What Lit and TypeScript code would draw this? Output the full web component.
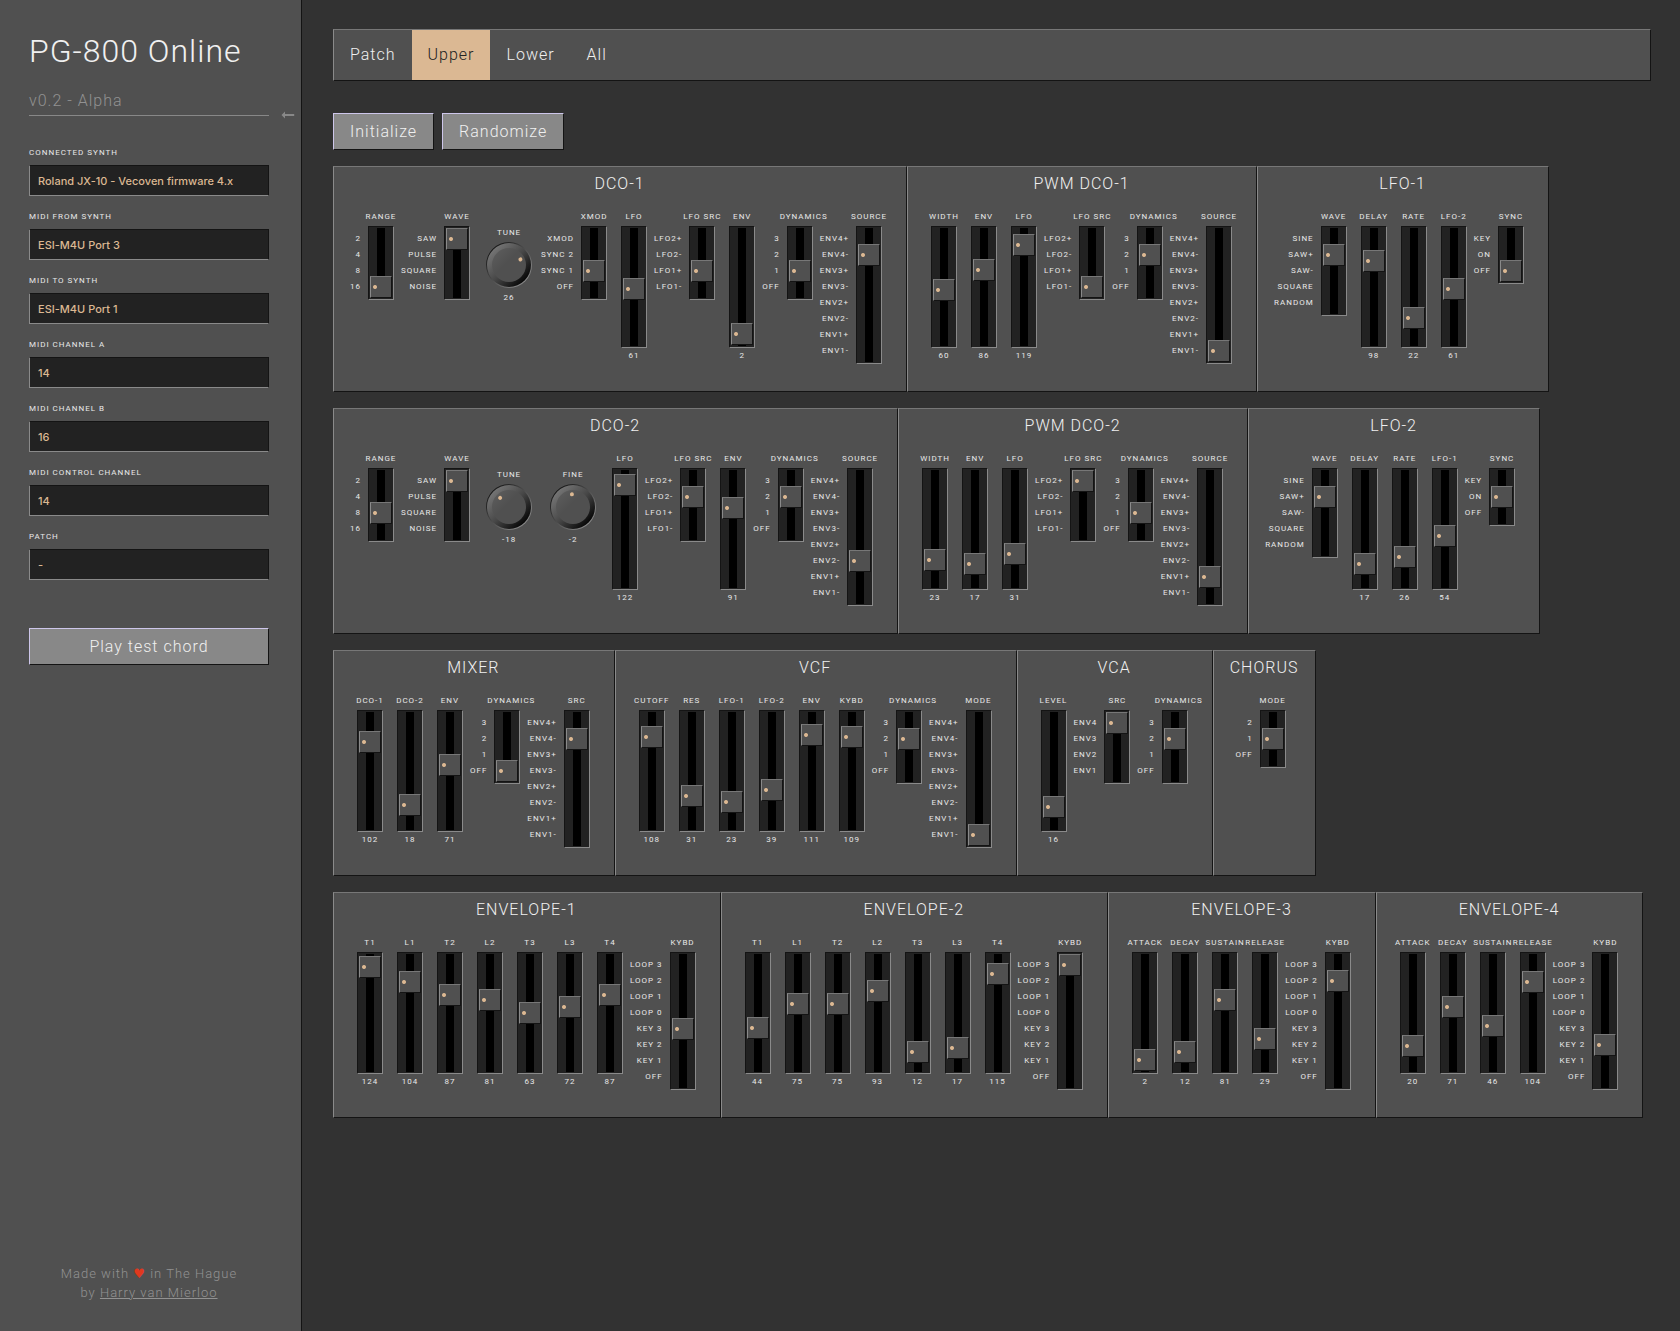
import { LitElement, html, css, svg, nothing } from "lit";
import { customElement, property, state } from "lit/decorators.js";
import { classMap } from "lit/directives/class-map.js";
import { styleMap } from "lit/directives/style-map.js";

type Control =
  | { kind: "fader"; name: string; value: number }
  | { kind: "knob"; name: string; value: number }
  | { kind: "switch"; name: string; options: string[]; index: number };

interface Section {
  title: string;
  controls: Control[];
}

const RANGES = ["2", "4", "8", "16"];
const WAVES = ["SAW", "PULSE", "SQUARE", "NOISE"];
const XMODS = ["XMOD", "SYNC 2", "SYNC 1", "OFF"];
const LFO_SOURCES = ["LFO2+", "LFO2-", "LFO1+", "LFO1-"];
const DYNAMICS = ["3", "2", "1", "OFF"];
const ENV_MODES = ["ENV4+", "ENV4-", "ENV3+", "ENV3-", "ENV2+", "ENV2-", "ENV1+", "ENV1-"];
const ENV_SOURCES = ["ENV4", "ENV3", "ENV2", "ENV1"];
const LFO_WAVES = ["SINE", "SAW+", "SAW-", "SQUARE", "RANDOM"];
const SYNCS = ["KEY", "ON", "OFF"];
const CHORUS_MODES = ["2", "1", "OFF"];
const KEYBOARD = ["LOOP 3", "LOOP 2", "LOOP 1", "LOOP 0", "KEY 3", "KEY 2", "KEY 1", "OFF"];

const fader = (name: string, value: number): Control => ({ kind: "fader", name, value });
const knob = (name: string, value: number): Control => ({ kind: "knob", name, value });
const choice = (name: string, options: string[], index: number): Control => ({
  kind: "switch",
  name,
  options,
  index,
});

const ROWS: Section[][] = [
  [
    {
      title: "DCO-1",
      controls: [
        choice("RANGE", RANGES, 3),
        choice("WAVE", WAVES, 0),
        knob("TUNE", 26),
        choice("XMOD", XMODS, 2),
        fader("LFO", 61),
        choice("LFO SRC", LFO_SOURCES, 2),
        fader("ENV", 2),
        choice("DYNAMICS", DYNAMICS, 2),
        choice("SOURCE", ENV_MODES, 1),
      ],
    },
    {
      title: "PWM DCO-1",
      controls: [
        fader("WIDTH", 60),
        fader("ENV", 86),
        fader("LFO", 119),
        choice("LFO SRC", LFO_SOURCES, 3),
        choice("DYNAMICS", DYNAMICS, 1),
        choice("SOURCE", ENV_MODES, 7),
      ],
    },
    {
      title: "LFO-1",
      controls: [
        choice("WAVE", LFO_WAVES, 1),
        fader("DELAY", 98),
        fader("RATE", 22),
        fader("LFO-2", 61),
        choice("SYNC", SYNCS, 2),
      ],
    },
  ],
  [
    {
      title: "DCO-2",
      controls: [
        choice("RANGE", RANGES, 2),
        choice("WAVE", WAVES, 0),
        knob("TUNE", -18),
        knob("FINE", -2),
        fader("LFO", 122),
        choice("LFO SRC", LFO_SOURCES, 1),
        fader("ENV", 91),
        choice("DYNAMICS", DYNAMICS, 1),
        choice("SOURCE", ENV_MODES, 5),
      ],
    },
    {
      title: "PWM DCO-2",
      controls: [
        fader("WIDTH", 23),
        fader("ENV", 17),
        fader("LFO", 31),
        choice("LFO SRC", LFO_SOURCES, 0),
        choice("DYNAMICS", DYNAMICS, 2),
        choice("SOURCE", ENV_MODES, 6),
      ],
    },
    {
      title: "LFO-2",
      controls: [
        choice("WAVE", LFO_WAVES, 1),
        fader("DELAY", 17),
        fader("RATE", 26),
        fader("LFO-1", 54),
        choice("SYNC", SYNCS, 1),
      ],
    },
  ],
  [
    {
      title: "MIXER",
      controls: [
        fader("DCO-1", 102),
        fader("DCO-2", 18),
        fader("ENV", 71),
        choice("DYNAMICS", DYNAMICS, 3),
        choice("SRC", ENV_MODES, 1),
      ],
    },
    {
      title: "VCF",
      controls: [
        fader("CUTOFF", 108),
        fader("RES", 31),
        fader("LFO-1", 23),
        fader("LFO-2", 39),
        fader("ENV", 111),
        fader("KYBD", 109),
        choice("DYNAMICS", DYNAMICS, 1),
        choice("MODE", ENV_MODES, 7),
      ],
    },
    {
      title: "VCA",
      controls: [
        fader("LEVEL", 16),
        choice("SRC", ENV_SOURCES, 0),
        choice("DYNAMICS", DYNAMICS, 1),
      ],
    },
    { title: "CHORUS", controls: [choice("MODE", CHORUS_MODES, 1)] },
  ],
  [
    {
      title: "ENVELOPE-1",
      controls: [
        fader("T1", 124),
        fader("L1", 104),
        fader("T2", 87),
        fader("L2", 81),
        fader("T3", 63),
        fader("L3", 72),
        fader("T4", 87),
        choice("KYBD", KEYBOARD, 4),
      ],
    },
    {
      title: "ENVELOPE-2",
      controls: [
        fader("T1", 44),
        fader("L1", 75),
        fader("T2", 75),
        fader("L2", 93),
        fader("T3", 12),
        fader("L3", 17),
        fader("T4", 115),
        choice("KYBD", KEYBOARD, 0),
      ],
    },
    {
      title: "ENVELOPE-3",
      controls: [
        fader("ATTACK", 2),
        fader("DECAY", 12),
        fader("SUSTAIN", 81),
        fader("RELEASE", 29),
        choice("KYBD", KEYBOARD, 1),
      ],
    },
    {
      title: "ENVELOPE-4",
      controls: [
        fader("ATTACK", 20),
        fader("DECAY", 71),
        fader("SUSTAIN", 46),
        fader("RELEASE", 104),
        choice("KYBD", KEYBOARD, 5),
      ],
    },
  ],
];

@customElement("synth-section")
export class SynthSection extends LitElement {
  static styles = css`
    :host {
      display: block;
      box-sizing: border-box;
      padding: 0 17px 27px 16px;
      background: #505050;
      border: 1px solid;
      border-color: #777 #141414 #141414 #8a8a8a;
    }
    .title {
      margin: 0 0 7px;
      font-size: 16px;
      font-weight: 300;
      line-height: 34px;
      letter-spacing: 1px;
      text-align: center;
      color: #f0f0f0;
    }
    .controls {
      display: flex;
      justify-content: center;
      align-items: flex-start;
      font-size: 8px;
      font-weight: 400;
      letter-spacing: 1px;
      white-space: nowrap;
      color: #e8e8e8;
    }
    .fader,
    .knob {
      display: flex;
      flex-direction: column;
      align-items: center;
      width: 40px;
    }
    .knob {
      width: 64px;
      padding-top: 16px;
    }
    .switch {
      display: grid;
      grid-template-columns: auto 40px;
      justify-items: center;
    }
    .name {
      width: 100%;
      line-height: 18px;
      text-align: center;
    }
    .switch .name {
      grid-column: 2;
    }
    .value {
      line-height: 16px;
    }
    .knob .value {
      line-height: 20px;
    }
    .options {
      grid-column: 1;
      margin: 0;
      padding: 5px 0 0;
      list-style: none;
      text-align: right;
      line-height: 16px;
    }
    .track {
      appearance: none;
      writing-mode: vertical-lr;
      direction: rtl;
      box-sizing: border-box;
      width: 26px;
      height: 122px;
      margin: 0;
      padding: 1px;
      border: 1px solid;
      border-color: #141414 #8a8a8a #8a8a8a #141414;
      background: linear-gradient(#000, #000) center / 8px 100% no-repeat content-box, #222;
      cursor: pointer;
    }
    .track::-webkit-slider-runnable-track {
      width: 22px;
    }
    .track::-webkit-slider-thumb {
      appearance: none;
      box-sizing: border-box;
      width: 22px;
      height: 22px;
      border: 1px solid;
      border-color: #777 #141414 #141414 #8a8a8a;
      background: radial-gradient(circle at 4px 10px, #dcb892 1.5px, transparent 2.4px), #505050;
    }
    .dial {
      position: relative;
      width: 46px;
      height: 46px;
    }
    .face {
      display: block;
      width: 46px;
      height: 46px;
    }
    .turn {
      position: absolute;
      inset: 0;
      width: 100%;
      height: 100%;
      margin: 0;
      opacity: 0;
      cursor: pointer;
    }
  `;

  @property({ attribute: false }) section: Section = { title: "", controls: [] };

  private change(index: number, patch: Partial<{ value: number; index: number }>) {
    const controls = this.section.controls.map((c, i) =>
      i === index ? ({ ...c, ...patch } as Control) : c,
    );
    this.section = { ...this.section, controls };
  }

  private renderDial(value: number) {
    const angle = value * 2.46;
    return svg`
      <svg class="face" viewBox="0 0 46 46" aria-hidden="true">
        <defs>
          <linearGradient id="rim" x1="0.15" y1="0.15" x2="0.85" y2="0.85">
            <stop offset="0" stop-color="#161616" />
            <stop offset="1" stop-color="#8a8a8a" />
          </linearGradient>
          <linearGradient id="bevel" x1="0.15" y1="0.15" x2="0.85" y2="0.85">
            <stop offset="0" stop-color="#747474" />
            <stop offset="0.5" stop-color="#484848" />
            <stop offset="1" stop-color="#080808" />
          </linearGradient>
          <linearGradient id="cap" x1="0.15" y1="0.15" x2="0.85" y2="0.85">
            <stop offset="0" stop-color="#5a5a5a" />
            <stop offset="0.4" stop-color="#505050" />
          </linearGradient>
        </defs>
        <circle cx="23" cy="23" r="23" fill="url(#rim)" />
        <circle cx="23" cy="23" r="22" fill="url(#bevel)" />
        <circle cx="23" cy="23" r="17" fill="url(#cap)" />
        <circle cx="23" cy="10.3" r="2" fill="#dcb892" transform="rotate(${angle} 23 23)" />
      </svg>`;
  }

  private renderControl(c: Control, i: number) {
    const id = `control-${i}`;
    if (c.kind === "fader") {
      return html`<div class="fader">
        <label class="name" for=${id}>${c.name}</label>
        <input
          class="track"
          id=${id}
          type="range"
          min="0"
          max="127"
          .value=${String(c.value)}
          @input=${(e: Event) => this.change(i, { value: Number((e.target as HTMLInputElement).value) })}
        />
        <output class="value" for=${id}>${c.value}</output>
      </div>`;
    }
    if (c.kind === "knob") {
      return html`<div class="knob">
        <label class="name" for=${id}>${c.name}</label>
        <div class="dial">
          ${this.renderDial(c.value)}
          <input
            class="turn"
            id=${id}
            type="range"
            min="-64"
            max="63"
            .value=${String(c.value)}
            @input=${(e: Event) => this.change(i, { value: Number((e.target as HTMLInputElement).value) })}
          />
        </div>
        <output class="value" for=${id}>${c.value}</output>
      </div>`;
    }
    const last = c.options.length - 1;
    return html`<div class="switch">
      <label class="name" for=${id}>${c.name}</label>
      <ul class="options">
        ${c.options.map((o) => html`<li>${o}</li>`)}
      </ul>
      <input
        class="track"
        id=${id}
        type="range"
        min="0"
        max=${last}
        style=${styleMap({ height: `${c.options.length * 16 + 10}px` })}
        .value=${String(last - c.index)}
        @input=${(e: Event) => this.change(i, { index: last - Number((e.target as HTMLInputElement).value) })}
      />
    </div>`;
  }

  render() {
    return html`
      <h2 class="title">${this.section.title}</h2>
      <div class="controls">${this.section.controls.map((c, i) => this.renderControl(c, i))}</div>
    `;
  }
}

const FIELDS: { id: string; label: string; value: string; text?: boolean }[] = [
  { id: "synth", label: "CONNECTED SYNTH", value: "Roland JX-10 - Vecoven firmware 4.x" },
  { id: "midi-from", label: "MIDI FROM SYNTH", value: "ESI-M4U Port 3" },
  { id: "midi-to", label: "MIDI TO SYNTH", value: "ESI-M4U Port 1" },
  { id: "channel-a", label: "MIDI CHANNEL A", value: "14" },
  { id: "channel-b", label: "MIDI CHANNEL B", value: "16" },
  { id: "channel-control", label: "MIDI CONTROL CHANNEL", value: "14" },
  { id: "patch", label: "PATCH", value: "-", text: true },
];

const TABS = ["Patch", "Upper", "Lower", "All"];

@customElement("app-root")
export class AppRoot extends LitElement {
  static styles = css`
    :host {
      display: flex;
      min-height: 100vh;
      background: #323232;
      font-family: Roboto, "Liberation Sans", sans-serif;
      font-size: 16px;
      font-weight: 300;
      letter-spacing: 1px;
      color: #f0f0f0;
    }
    .sidebar {
      display: flex;
      flex-direction: column;
      flex: none;
      box-sizing: border-box;
      width: 302px;
      padding: 31px 32px 29px 29px;
      background: #505050;
      border-right: 1px solid #141414;
    }
    .brand {
      margin: 0;
      font-size: 32px;
      font-weight: 300;
      line-height: 40px;
      white-space: nowrap;
    }
    .version-row {
      position: relative;
      margin-bottom: 28px;
      padding: 16px 0 1px;
      border-bottom: 1px solid #888;
    }
    .version {
      margin: 0;
      line-height: 27px;
      color: #929292;
    }
    .collapse {
      position: absolute;
      right: -26px;
      bottom: -7px;
      width: 14px;
      height: 14px;
      padding: 0;
      border: 0;
      background: none;
      cursor: pointer;
    }
    .arrow {
      display: block;
      width: 14px;
      height: 14px;
    }
    .fields {
      display: grid;
      gap: 12px;
    }
    .field {
      display: grid;
      gap: 3px;
    }
    .field-label {
      font-size: 8px;
      font-weight: 400;
      line-height: 18px;
      color: #e8e8e8;
    }
    .box {
      appearance: none;
      box-sizing: border-box;
      width: 100%;
      height: 31px;
      margin: 0;
      padding: 0 8px;
      border: 1px solid;
      border-color: #141414 #141414 #8a8a8a #8a8a8a;
      border-radius: 0;
      background: #222;
      color: #dcb892;
      font: 500 11px/20px Inter, sans-serif;
      letter-spacing: 0;
    }
    .button {
      box-sizing: border-box;
      height: 37px;
      margin: 0;
      padding: 0 16px;
      border: 1px solid;
      border-color: #cdc6ea #141414 #141414 #cdc6ea;
      background: #888;
      color: #f0f0f0;
      font: inherit;
      letter-spacing: inherit;
      cursor: pointer;
    }
    .chord {
      margin-top: 48px;
    }
    .credits {
      margin: auto 0 0;
      font-size: 13px;
      line-height: 19px;
      text-align: center;
      color: #929292;
    }
    .heart {
      font-family: "DejaVu Sans", sans-serif;
      font-weight: 400;
      color: #e0381e;
    }
    .author {
      color: inherit;
    }
    .main {
      flex: 1;
      min-width: 0;
      padding: 29px 29px 29px 31px;
    }
    .tabs {
      display: flex;
      margin-bottom: 32px;
      background: #505050;
      border: 1px solid;
      border-color: #777 #141414 #141414 #8a8a8a;
    }
    .tab {
      height: 50px;
      margin: 0;
      padding: 0 16px 2px;
      border: 0;
      background: none;
      color: inherit;
      font: inherit;
      letter-spacing: inherit;
      cursor: pointer;
    }
    .tab.active {
      background: #dbb893;
      color: #222;
    }
    .actions {
      display: flex;
      gap: 8px;
      margin-bottom: 16px;
    }
    .rows {
      display: grid;
      gap: 16px;
    }
    .row {
      display: flex;
    }
  `;

  @state() private tab = "Upper";

  private renderField(f: (typeof FIELDS)[number]) {
    return html`<div class="field">
      <label class="field-label" for=${f.id}>${f.label}</label>
      ${f.text
        ? html`<input class="box" id=${f.id} type="text" .value=${f.value} />`
        : html`<select class="box" id=${f.id}>
            <option>${f.value}</option>
          </select>`}
    </div>`;
  }

  render() {
    return html`
      <aside class="sidebar">
        <h1 class="brand">PG-800 Online</h1>
        <div class="version-row">
          <p class="version">v0.2 - Alpha</p>
          <button class="collapse" type="button" aria-label="Collapse sidebar">
            <svg class="arrow" viewBox="0 0 14 14" aria-hidden="true">
              <path d="M0.5 7 L4 3.4 V6 H13.2 V8 H4 V10.6 Z" fill="#888" />
            </svg>
          </button>
        </div>
        <div class="fields">${FIELDS.map((f) => this.renderField(f))}</div>
        <button class="button chord" type="button">Play test chord</button>
        <p class="credits">
          Made with <span class="heart">♥</span> in The Hague<br />by
          <a class="author" href="#">Harry van Mierloo</a>
        </p>
      </aside>
      <main class="main">
        <nav class="tabs">
          ${TABS.map(
            (t) => html`<button
              class=${classMap({ tab: true, active: t === this.tab })}
              type="button"
              aria-current=${t === this.tab ? "page" : nothing}
              @click=${() => (this.tab = t)}
            >
              ${t}
            </button>`,
          )}
        </nav>
        <div class="actions">
          <button class="button" type="button">Initialize</button>
          <button class="button" type="button">Randomize</button>
        </div>
        <div class="rows">
          ${ROWS.map(
            (row) => html`<div class="row">
              ${row.map((s) => html`<synth-section .section=${s}></synth-section>`)}
            </div>`,
          )}
        </div>
      </main>
    `;
  }
}
